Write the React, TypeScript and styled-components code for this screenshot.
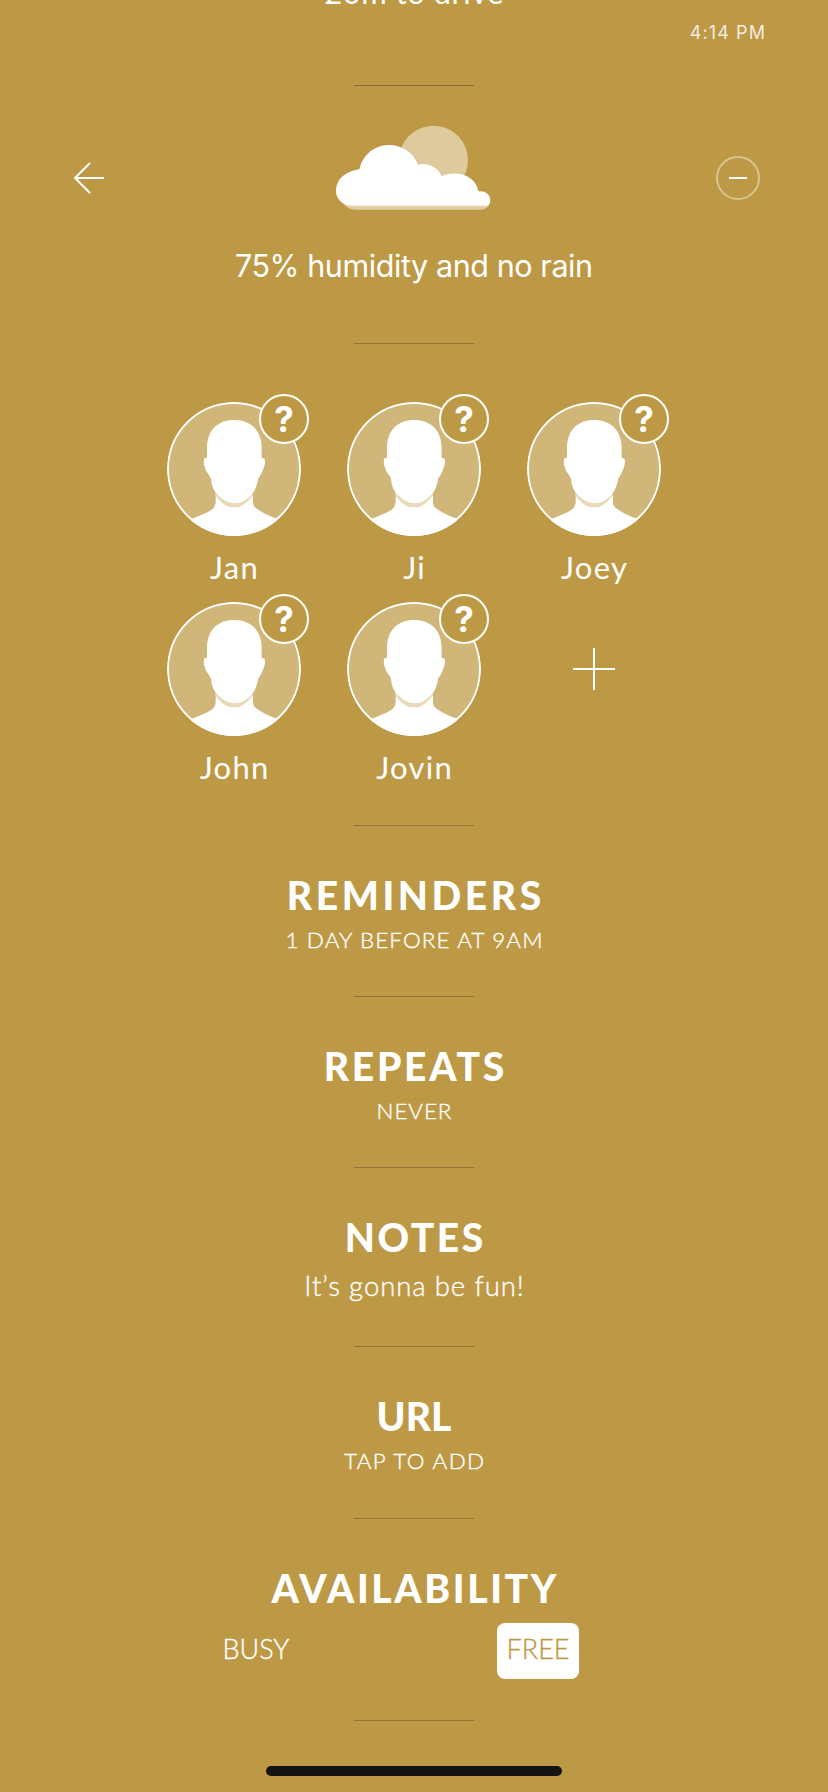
import React from "react";
import styled, { createGlobalStyle } from "styled-components";

const GOLD = "#bd9945";

const GlobalStyle = createGlobalStyle`
  * { box-sizing: border-box; }
  body { margin: 0; background: ${GOLD}; overflow: hidden; }
`;

const Screen = styled.div`
  position: relative;
  width: 828px;
  height: 1792px;
  overflow: hidden;
  background: ${GOLD};
  color: #fff;
  font-family: Lato, "Open Sans", sans-serif;
`;

const Content = styled.main`
  display: flex;
  flex-direction: column;
  align-items: center;
`;

const Block = styled.section<{ $height: number }>`
  display: flex;
  flex-direction: column;
  align-items: center;
  width: 100%;
  height: ${(p) => p.$height}px;
`;

const Divider = styled.hr<{ $tone?: string }>`
  flex: none;
  width: 120px;
  height: 1px;
  margin: 0;
  border: 0;
  background: ${(p) => p.$tone ?? "#937636"};
`;

const Label = styled.span<{ $size: number; $line: number; $spacing?: number; $weight?: number }>`
  display: block;
  white-space: nowrap;
  font-size: ${(p) => p.$size}px;
  line-height: ${(p) => p.$line}px;
  letter-spacing: ${(p) => p.$spacing ?? 0}px;
  margin-right: ${(p) => -(p.$spacing ?? 0)}px;
  font-weight: ${(p) => p.$weight ?? 400};
`;

const Detail = styled(Label)`
  font-weight: 300;
  -webkit-text-stroke: 0.35px currentColor;
`;

const Travel = styled(Label)`
  margin-top: -28px;
`;

const Forecast = styled(Label)`
  margin-top: 35px;
  font-family: Inter, sans-serif;
`;

const CloudIcon = styled.svg`
  display: block;
  margin-top: 39px;
`;

const Title = styled(Label).attrs({ as: "h2" })`
  margin-top: 45px;
  margin-bottom: 6px;
`;

const Guests = styled.div`
  display: grid;
  grid-template-columns: repeat(3, 180px);
  grid-auto-rows: 200px;
  margin-top: 58px;
`;

const Guest = styled.div`
  display: flex;
  flex-direction: column;
  align-items: center;
`;

const Avatar = styled.div`
  position: relative;
  width: 134px;
  height: 134px;
`;

const Portrait = styled.svg`
  display: block;
  border-radius: 50%;
`;

const Badge = styled.span`
  position: absolute;
  top: -8px;
  right: -8px;
  width: 50px;
  height: 50px;
  display: flex;
  align-items: center;
  justify-content: center;
  border: 2px solid #fff;
  border-radius: 50%;
  background: ${GOLD};
  font-family: Inter, sans-serif;
  font-size: 35px;
  font-weight: 700;
  line-height: 46px;
`;

const GuestName = styled(Label)`
  margin-top: 11px;
`;

const AddGuest = styled.button`
  display: flex;
  align-items: center;
  justify-content: center;
  width: 180px;
  height: 134px;
  padding: 0;
  border: 0;
  background: none;
`;

const Choices = styled.div`
  display: flex;
  justify-content: space-between;
  width: 400px;
  padding-right: 35px;
  margin-top: 5px;
`;

const Choice = styled.button<{ $selected?: boolean }>`
  display: flex;
  align-items: flex-start;
  justify-content: center;
  height: 56px;
  width: ${(p) => (p.$selected ? 82 : 84)}px;
  padding: 9px 0 0;
  border: 0;
  border-radius: 8px;
  font-family: inherit;
  color: ${(p) => (p.$selected ? GOLD : "#fff")};
  background: ${(p) => (p.$selected ? "#fff" : "none")};
`;

const Clock = styled.time`
  position: absolute;
  top: 21px;
  right: 62px;
  font: 400 18px/24px Inter, sans-serif;
  letter-spacing: 1.1px;
  color: rgba(255, 255, 255, 0.85);
`;

const Nav = styled.nav`
  position: absolute;
  top: 156px;
  left: 73px;
  right: 68px;
  display: flex;
  align-items: center;
  justify-content: space-between;
`;

const HomeBar = styled.div`
  position: absolute;
  left: 266px;
  bottom: 16px;
  width: 296px;
  height: 10px;
  border-radius: 5px;
  background: #141414;
`;

const guests = ["Jan", "Ji", "Joey", "John", "Jovin"];

const details = [
  { title: "REMINDERS", titleSpacing: 3.6, text: "1 DAY BEFORE AT 9AM", size: 22.4, line: 29, spacing: 1.15, height: 170 },
  { title: "REPEATS", titleSpacing: 2.7, text: "NEVER", size: 22.4, line: 29, spacing: 0.9, height: 170 },
  { title: "NOTES", titleSpacing: 2.5, text: "It’s gonna be fun!", size: 27.5, line: 37, spacing: 0.9, height: 178 },
  { title: "URL", titleSpacing: 0, text: "TAP TO ADD", size: 22.4, line: 29, spacing: 1.4, height: 171 },
];

const Face = () => (
  <Portrait width="134" height="134" viewBox="21 66 402 402">
    <circle cx="222" cy="267" r="201" fill="#d0b679" />
    <path d="M167 335V365Q166 384 150 392Q130 403 96 416L80 480H364L348 415Q316 404 295 389Q279 380 279 368V335Z" fill="#fff" />
    <path d="M167 332V347Q187 374 205 380Q222 383 239 380Q256 375 279 346V332Z" fill="#e8dab7" />
    <path d="M141 205C141 150 174 120 222 120C272 120 305 150 305 205V234H311Q317 238 314 255Q308 275 299 290Q294 291 293 304Q288 328 278 340Q260 361 244 367Q222 373 204 366Q184 358 169 340Q157 327 154 306Q153 292 149 289Q136 273 132 254Q130 237 134 235L141 233Z" fill="#fff" />
    <circle cx="222" cy="267" r="198" fill="none" stroke="#fff" strokeWidth="6" />
  </Portrait>
);

export default function App() {
  return (
    <Screen>
      <GlobalStyle />
      <Content>
        <Block $height={85}>
          <Travel $size={31} $line={40} $spacing={0.5}>20m to drive</Travel>
        </Block>
        <Divider $tone="#846a30" />
        <Block $height={257}>
          <CloudIcon width="156" height="86" viewBox="336 125 156 86">
            <circle cx="433.5" cy="160.2" r="34.5" fill="#deca9c" />
            <path d="M342 202Q347 209.7 356 209.7H481Q487 209.7 490 203Z" fill="#e0cea5" />
            <path d="M359.3 169.3A30.7 30.7 0 0 1 418 164.7C427 162 438 167 441.7 176C456 170 476 175 478.3 191.3C485 190.5 490.3 194 490.3 200.3Q490.3 204 488 205.8H350C341 204 336 198 336 190.7C336 179 345 171.5 359.3 169.3Z" fill="#fff" />
          </CloudIcon>
          <Forecast $size={30.5} $line={40} $spacing={-0.42}>75% humidity and no rain</Forecast>
        </Block>
        <Divider />
        <Block $height={481}>
          <Guests>
            {guests.map((name) => (
              <Guest key={name}>
                <Avatar>
                  <Face />
                  <Badge>?</Badge>
                </Avatar>
                <GuestName $size={31} $line={40} $spacing={1.3}>{name}</GuestName>
              </Guest>
            ))}
            <AddGuest aria-label="Add guest">
              <svg width="42" height="42" viewBox="0 0 42 42">
                <path d="M21 0V42M0 21H42" stroke="#fff" strokeWidth="2" />
              </svg>
            </AddGuest>
          </Guests>
        </Block>
        <Divider />
        {details.map((d) => (
          <React.Fragment key={d.title}>
            <Block $height={d.height}>
              <Title $size={39} $line={48} $spacing={d.titleSpacing} $weight={900}>{d.title}</Title>
              <Detail $size={d.size} $line={d.line} $spacing={d.spacing}>{d.text}</Detail>
            </Block>
            <Divider />
          </React.Fragment>
        ))}
        <Block $height={201}>
          <Title $size={39} $line={48} $spacing={2.6} $weight={900}>AVAILABILITY</Title>
          <Choices>
            <Choice><Detail $size={27} $line={34}>BUSY</Detail></Choice>
            <Choice $selected><Detail $size={27} $line={34}>FREE</Detail></Choice>
          </Choices>
        </Block>
        <Divider />
      </Content>
      <Clock>4:14 PM</Clock>
      <Nav>
        <svg width="32" height="32" viewBox="0 0 32 32" fill="none" stroke="#fff" strokeWidth="2">
          <path d="M31 22H2M17 7L2 22L17 37" transform="translate(0 -6)" />
        </svg>
        <svg width="44" height="44" viewBox="0 0 44 44" fill="none" strokeWidth="2">
          <circle cx="22" cy="22" r="21" stroke="#fff" strokeOpacity="0.42" />
          <path d="M13 22H31" stroke="#fff" />
        </svg>
      </Nav>
      <HomeBar />
    </Screen>
  );
}
